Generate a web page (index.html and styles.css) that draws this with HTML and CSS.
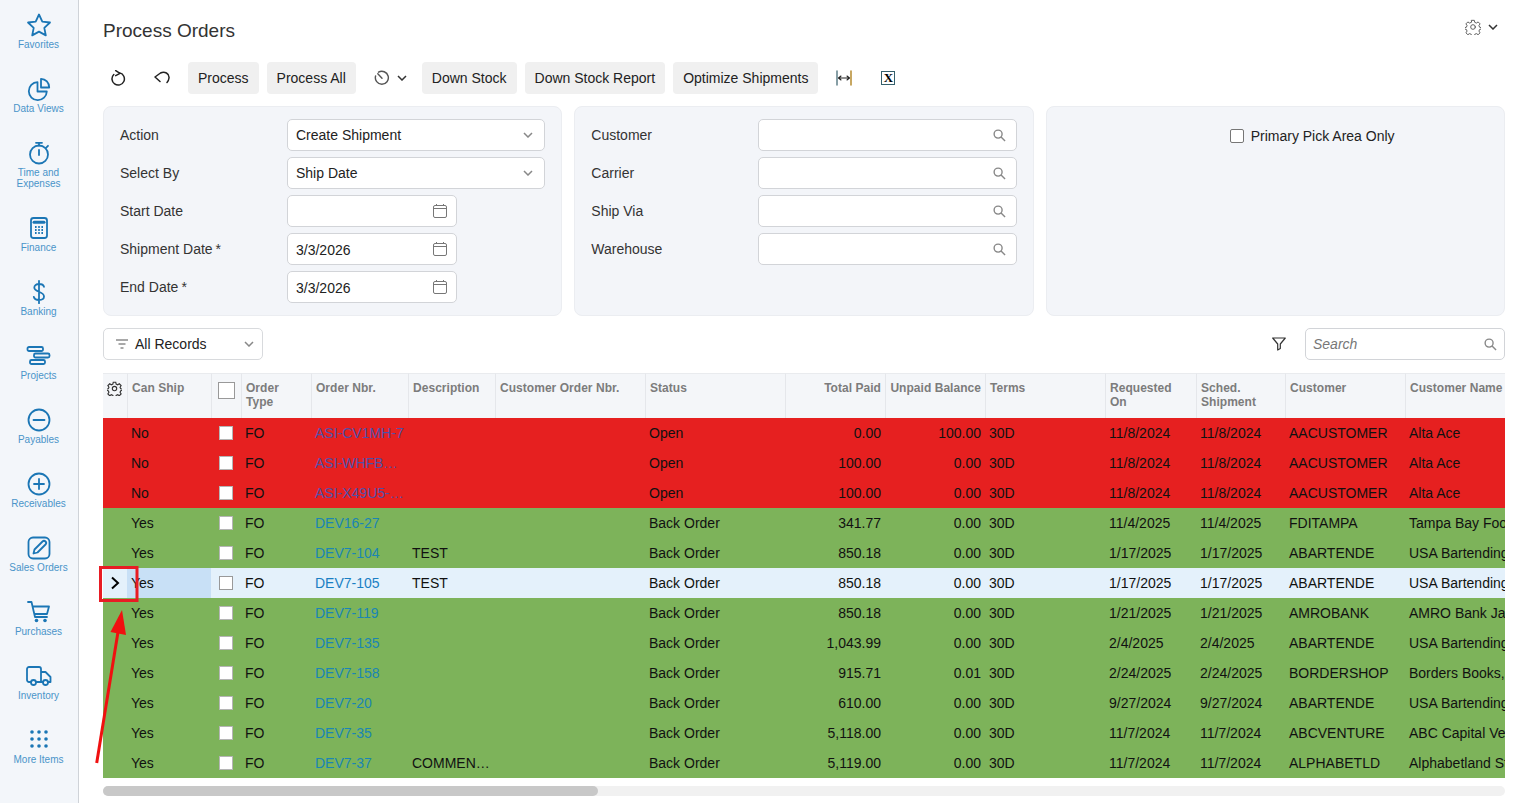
FILE: index.html
```html
<!DOCTYPE html>
<html lang="en">
<head>
<meta charset="utf-8">
<title>Process Orders</title>
<link rel="stylesheet" href="styles.css">
</head>
<body>
<div class="app">
  <nav class="sidebar">
    <a class="nav-item"><svg class="nav-icon" viewBox="0 0 24 24"><path d="M12 1.500l3.300 7.100 7.700.9-5.700 5.300 1.500 7.600-6.800-3.800-6.800 3.800 1.500-7.600L1 9.500l7.700-.9z"/></svg><span>Favorites</span></a>
    <a class="nav-item"><svg class="nav-icon" viewBox="0 0 24 24"><path d="M10.500 5.200a9 9 0 1 0 9.300 9.300h-9.300z"/><path d="M14 1.800a8.500 8.500 0 0 1 8.200 8.700H14z"/></svg><span>Data Views</span></a>
    <a class="nav-item"><svg class="nav-icon" viewBox="0 0 24 24"><circle cx="12" cy="13.500" r="9"/><path d="M9 1.800h6M12 2v2.500M12 9v5M19 6.800l2-2"/></svg><span>Time and<br>Expenses</span></a>
    <a class="nav-item"><svg class="nav-icon" viewBox="0 0 24 24"><rect x="4" y="2" width="16" height="20" rx="2.500"/><path d="M7 6.200h10" stroke-width="3"/><path class="dots" d="M8 11h1.600M11.200 11h1.600M14.400 11h1.600M8 14h1.600M11.200 14h1.600M14.400 14h1.600M8 17h1.600M11.200 17h1.600M14.400 17h1.600"/></svg><span>Finance</span></a>
    <a class="nav-item"><svg class="nav-icon" viewBox="0 0 24 24"><path d="M17 6.800C16.500 4.800 14.500 4 12 4 9.300 4 7.300 5.200 7.300 7.500c0 5 9.700 3.500 9.700 9 0 2.300-2.200 3.500-5 3.500-2.700 0-4.700-1-5.200-3.200M12 .8v22.400"/></svg><span>Banking</span></a>
    <a class="nav-item"><svg class="nav-icon" viewBox="0 0 24 24"><rect x=".5" y="3" width="15.500" height="4" rx="1.500"/><rect x="7" y="9.500" width="15.500" height="4" rx="1.500"/><rect x="3" y="16" width="15" height="4" rx="1.500"/></svg><span>Projects</span></a>
    <a class="nav-item"><svg class="nav-icon" viewBox="0 0 24 24"><circle cx="12" cy="12" r="10.500"/><path d="M6.500 12h11"/></svg><span>Payables</span></a>
    <a class="nav-item"><svg class="nav-icon" viewBox="0 0 24 24"><circle cx="12" cy="12" r="10.500"/><path d="M7 12h10M12 7v10"/></svg><span>Receivables</span></a>
    <a class="nav-item"><svg class="nav-icon" viewBox="0 0 24 24"><rect x="1.500" y="1.500" width="21" height="21" rx="4.500"/><path d="M6.500 17.500l1-4L15.500 5.500a1.800 1.800 0 0 1 3 3L10.500 16.500z"/></svg><span>Sales Orders</span></a>
    <a class="nav-item"><svg class="nav-icon" viewBox="0 0 24 24"><path d="M1 2h3.500l3.500 15h12M6 6.500h16l-2 7.500H7.500"/><circle class="solid" cx="9.500" cy="20.500" r="1.800"/><circle class="solid" cx="18" cy="20.500" r="1.800"/></svg><span>Purchases</span></a>
    <a class="nav-item"><svg class="nav-icon nav-truck" viewBox="0 0 26 24"><path d="M5 18H3a2 2 0 0 1-2-2V5a2 2 0 0 1 2-2h10a2 2 0 0 1 2 2v13H10M15 8h4.500l5 5v5H22M17 18h-2"/><circle cx="7.500" cy="18.500" r="2.500"/><circle cx="19.500" cy="18.500" r="2.500"/></svg><span>Inventory</span></a>
    <a class="nav-item"><svg class="nav-icon" viewBox="0 0 24 24"><g class="solid"><circle cx="5" cy="4" r="1.800"/><circle cx="12" cy="4" r="1.800"/><circle cx="19" cy="4" r="1.800"/><circle cx="5" cy="11" r="1.800"/><circle cx="12" cy="11" r="1.800"/><circle cx="19" cy="11" r="1.800"/><circle cx="5" cy="18" r="1.800"/><circle cx="12" cy="18" r="1.800"/><circle cx="19" cy="18" r="1.800"/></g></svg><span>More Items</span></a>
  </nav>

  <main class="main">
    <header class="title-row">
      <h1>Process Orders</h1>
      <div class="page-settings">
        <svg class="ico16 thin" viewBox="0 0 24 24"><circle cx="12" cy="12" r="3.500"/><path d="M10 2h4l.6 3 2.500 1.100 2.600-1.700 2.900 2.900-1.700 2.600 1.100 2.500 3 .6v2l-3 .6-1.100 2.500 1.700 2.600-2.900 2.900-2.600-1.700-2.500 1.100-.6 3h-4l-.6-3-2.500-1.100-2.600 1.700-2.900-2.900 1.700-2.600-1.100-2.500-3-.6v-2l3-.6 1.100-2.500-1.700-2.600 2.900-2.900 2.600 1.700 2.500-1.100z"/></svg>
        <svg class="chev" viewBox="0 0 10 6"><path d="M1 1l4 4 4-4"/></svg>
      </div>
    </header>

    <div class="toolbar">
      <span class="tool"><svg class="ico16 dark" viewBox="0 0 16 16"><path d="M9.800 2.900A6.200 6.200 0 1 1 3.800 4.500M5.700.6L10 3.300 5.700 5.700"/></svg></span>
      <span class="tool"><svg class="ico16 dark" viewBox="0 0 16 16"><path d="M6 11.500L1 7l5.500-4C10.500.8 15.500 3.500 15 8c-.2 2-1 3.500-2 4.500"/></svg></span>
      <button class="btn">Process</button>
      <button class="btn">Process All</button>
      <span class="tool tool-menu"><svg class="ico16 thin" viewBox="0 0 16 16"><path d="M4.500 2.200A6.500 6.500 0 1 1 1.600 6M3.800 3.800L8 8.200"/></svg><svg class="chev" viewBox="0 0 10 6"><path d="M1 1l4 4 4-4"/></svg></span>
      <button class="btn">Down Stock</button>
      <button class="btn">Down Stock Report</button>
      <button class="btn">Optimize Shipments</button>
      <span class="tool tool-fit"><svg class="ico16 fit" viewBox="0 0 16 16"><path class="fit-l" d="M1 1v14"/><path class="fit-r" d="M15 1v14"/><path d="M2.500 8h11M5 6L2.500 8 5 10M11 6l2.500 2-2.500 2"/></svg></span>
      <span class="tool tool-xl"><span class="xl-box">X</span></span>
    </div>

    <section class="panels">
      <div class="panel">
        <div class="field"><label>Action</label><div class="input"><span>Create Shipment</span><svg class="chev grey" viewBox="0 0 10 6"><path d="M1 1l4 4 4-4"/></svg></div></div>
        <div class="field"><label>Select By</label><div class="input"><span>Ship Date</span><svg class="chev grey" viewBox="0 0 10 6"><path d="M1 1l4 4 4-4"/></svg></div></div>
        <div class="field"><label>Start Date</label><div class="input date"><span></span><svg class="cal" viewBox="0 0 14 14"><rect x=".5" y="1.500" width="13" height="12" rx="1.500"/><path d="M.5 4.500h13M3.500 0v2M10.500 0v2"/></svg></div></div>
        <div class="field"><label>Shipment Date<i class="req">*</i></label><div class="input date"><span>3/3/2026</span><svg class="cal" viewBox="0 0 14 14"><rect x=".5" y="1.500" width="13" height="12" rx="1.500"/><path d="M.5 4.500h13M3.500 0v2M10.500 0v2"/></svg></div></div>
        <div class="field"><label>End Date<i class="req">*</i></label><div class="input date"><span>3/3/2026</span><svg class="cal" viewBox="0 0 14 14"><rect x=".5" y="1.500" width="13" height="12" rx="1.500"/><path d="M.5 4.500h13M3.500 0v2M10.500 0v2"/></svg></div></div>
      </div>
      <div class="panel">
        <div class="field"><label>Customer</label><div class="input"><span></span><svg class="mag" viewBox="0 0 14 14"><circle cx="5.500" cy="5.500" r="4.300"/><path d="M8.700 8.700L13 13"/></svg></div></div>
        <div class="field"><label>Carrier</label><div class="input"><span></span><svg class="mag" viewBox="0 0 14 14"><circle cx="5.500" cy="5.500" r="4.300"/><path d="M8.700 8.700L13 13"/></svg></div></div>
        <div class="field"><label>Ship Via</label><div class="input"><span></span><svg class="mag" viewBox="0 0 14 14"><circle cx="5.500" cy="5.500" r="4.300"/><path d="M8.700 8.700L13 13"/></svg></div></div>
        <div class="field"><label>Warehouse</label><div class="input"><span></span><svg class="mag" viewBox="0 0 14 14"><circle cx="5.500" cy="5.500" r="4.300"/><path d="M8.700 8.700L13 13"/></svg></div></div>
      </div>
      <div class="panel panel-check">
        <span class="check check-form"></span><span>Primary Pick Area Only</span>
      </div>
    </section>

    <div class="filter-row">
      <div class="records">
        <svg class="lines" viewBox="0 0 12 10"><path d="M0 1h12M2.500 5h7M4.500 9h3"/></svg>
        <span>All Records</span>
        <svg class="chev grey" viewBox="0 0 10 6"><path d="M1 1l4 4 4-4"/></svg>
      </div>
      <svg class="funnel" viewBox="0 0 14 14"><path d="M.7 1h12.600L8.300 7v4.500L5.700 13V7z"/></svg>
      <div class="search"><span>Search</span><svg class="mag" viewBox="0 0 14 14"><circle cx="5.500" cy="5.500" r="4.300"/><path d="M8.700 8.700L13 13"/></svg></div>
    </div>

    <table class="grid">
      <colgroup>
        <col class="c-gear"><col class="c-ship"><col class="c-chk"><col class="c-type"><col class="c-nbr"><col class="c-desc"><col class="c-cust-ord"><col class="c-status"><col class="c-paid"><col class="c-bal"><col class="c-terms"><col class="c-req"><col class="c-sched"><col class="c-cust"><col class="c-name">
      </colgroup>
      <thead>
        <tr>
          <th class="gear-th"><svg class="ico14 thin-dark" viewBox="0 0 24 24"><circle cx="12" cy="12" r="3.500"/><path d="M10 2h4l.6 3 2.500 1.100 2.600-1.700 2.900 2.900-1.700 2.600 1.100 2.500 3 .6v2l-3 .6-1.100 2.500 1.700 2.600-2.900 2.900-2.600-1.700-2.500 1.100-.6 3h-4l-.6-3-2.500-1.100-2.600 1.700-2.900-2.900 1.700-2.600-1.100-2.500-3-.6v-2l3-.6 1.100-2.500-1.700-2.600 2.900-2.900 2.600 1.700 2.500-1.100z"/></svg></th>
          <th>Can Ship</th><th class="chk-th"><span class="check check-head"></span></th><th>Order<br>Type</th><th>Order Nbr.</th><th>Description</th><th>Customer Order Nbr.</th><th>Status</th><th class="num">Total Paid</th><th class="num">Unpaid Balance</th><th>Terms</th><th>Requested<br>On</th><th>Sched.<br>Shipment</th><th>Customer</th><th>Customer Name</th>
        </tr>
      </thead>
      <tbody>
        <tr class="red"><td></td><td>No</td><td class="chk"><span class="check"></span></td><td>FO</td><td><a>ASI-CV1MH-7</a></td><td></td><td></td><td>Open</td><td class="num">0.00</td><td class="num">100.00</td><td>30D</td><td>11/8/2024</td><td>11/8/2024</td><td>AACUSTOMER</td><td>Alta Ace</td></tr>
        <tr class="red"><td></td><td>No</td><td class="chk"><span class="check"></span></td><td>FO</td><td><a>ASI-WHFB…</a></td><td></td><td></td><td>Open</td><td class="num">100.00</td><td class="num">0.00</td><td>30D</td><td>11/8/2024</td><td>11/8/2024</td><td>AACUSTOMER</td><td>Alta Ace</td></tr>
        <tr class="red"><td></td><td>No</td><td class="chk"><span class="check"></span></td><td>FO</td><td><a>ASI-X49U5-…</a></td><td></td><td></td><td>Open</td><td class="num">100.00</td><td class="num">0.00</td><td>30D</td><td>11/8/2024</td><td>11/8/2024</td><td>AACUSTOMER</td><td>Alta Ace</td></tr>
        <tr class="green"><td></td><td>Yes</td><td class="chk"><span class="check"></span></td><td>FO</td><td><a>DEV16-27</a></td><td></td><td></td><td>Back Order</td><td class="num">341.77</td><td class="num">0.00</td><td>30D</td><td>11/4/2025</td><td>11/4/2025</td><td>FDITAMPA</td><td>Tampa Bay Foods</td></tr>
        <tr class="green"><td></td><td>Yes</td><td class="chk"><span class="check"></span></td><td>FO</td><td><a>DEV7-104</a></td><td>TEST</td><td></td><td>Back Order</td><td class="num">850.18</td><td class="num">0.00</td><td>30D</td><td>1/17/2025</td><td>1/17/2025</td><td>ABARTENDE</td><td>USA Bartending</td></tr>
        <tr class="selected"><td class="sel-arrow"><svg class="row-arrow" viewBox="0 0 10 14"><path d="M2 1.500L8 7l-6 5.500"/></svg></td><td class="sel-ship">Yes</td><td class="chk"><span class="check"></span></td><td>FO</td><td><a>DEV7-105</a></td><td>TEST</td><td></td><td>Back Order</td><td class="num">850.18</td><td class="num">0.00</td><td>30D</td><td>1/17/2025</td><td>1/17/2025</td><td>ABARTENDE</td><td>USA Bartending</td></tr>
        <tr class="green"><td></td><td>Yes</td><td class="chk"><span class="check"></span></td><td>FO</td><td><a>DEV7-119</a></td><td></td><td></td><td>Back Order</td><td class="num">850.18</td><td class="num">0.00</td><td>30D</td><td>1/21/2025</td><td>1/21/2025</td><td>AMROBANK</td><td>AMRO Bank Japan</td></tr>
        <tr class="green"><td></td><td>Yes</td><td class="chk"><span class="check"></span></td><td>FO</td><td><a>DEV7-135</a></td><td></td><td></td><td>Back Order</td><td class="num">1,043.99</td><td class="num">0.00</td><td>30D</td><td>2/4/2025</td><td>2/4/2025</td><td>ABARTENDE</td><td>USA Bartending</td></tr>
        <tr class="green"><td></td><td>Yes</td><td class="chk"><span class="check"></span></td><td>FO</td><td><a>DEV7-158</a></td><td></td><td></td><td>Back Order</td><td class="num">915.71</td><td class="num">0.01</td><td>30D</td><td>2/24/2025</td><td>2/24/2025</td><td>BORDERSHOP</td><td>Borders Books, Inc</td></tr>
        <tr class="green"><td></td><td>Yes</td><td class="chk"><span class="check"></span></td><td>FO</td><td><a>DEV7-20</a></td><td></td><td></td><td>Back Order</td><td class="num">610.00</td><td class="num">0.00</td><td>30D</td><td>9/27/2024</td><td>9/27/2024</td><td>ABARTENDE</td><td>USA Bartending</td></tr>
        <tr class="green"><td></td><td>Yes</td><td class="chk"><span class="check"></span></td><td>FO</td><td><a>DEV7-35</a></td><td></td><td></td><td>Back Order</td><td class="num">5,118.00</td><td class="num">0.00</td><td>30D</td><td>11/7/2024</td><td>11/7/2024</td><td>ABCVENTURE</td><td>ABC Capital Ventures</td></tr>
        <tr class="green"><td></td><td>Yes</td><td class="chk"><span class="check"></span></td><td>FO</td><td><a>DEV7-37</a></td><td>COMMEN…</td><td></td><td>Back Order</td><td class="num">5,119.00</td><td class="num">0.00</td><td>30D</td><td>11/7/2024</td><td>11/7/2024</td><td>ALPHABETLD</td><td>Alphabetland Stores</td></tr>
      </tbody>
    </table>

    <div class="scrollbar"><div class="thumb"></div></div>
  </main>

  <svg class="annotation" viewBox="0 0 60 210">
    <rect x="1.500" y="1.500" width="36.500" height="33" />
    <path class="arrow-line" d="M-2.300 197L19 66"/>
    <path class="arrow-head" d="M23 44L27 69L11.500 66z"/>
  </svg>
</div>
</body>
</html>
```
FILE: styles.css
```css
* { box-sizing: border-box; }
html, body { margin: 0; height: 100%; overflow: hidden; background: #fff; }
body { font-family: "Liberation Sans", Arial, sans-serif; font-size: 14px; color: #222; }
.app { display: flex; height: 803px; position: relative; }

.sidebar { width: 79px; flex: none; background: #f3f6fa; border-right: 1px solid #cfd3d8; padding: 13px 1px 0 0; display: flex; flex-direction: column; }
.nav-item { display: flex; flex-direction: column; align-items: center; text-align: center; color: #4a94c9; font-size: 10px; line-height: 11px; padding-bottom: 27px; }
.nav-item span { margin-top: 2px; }
.nav-icon { width: 24px; height: 24px; fill: none; stroke: #1b76b5; stroke-width: 1.800; stroke-linejoin: round; stroke-linecap: round; overflow: visible; }
.nav-truck { width: 26px; }
.nav-icon .solid { fill: #1b76b5; stroke: none; }
.nav-icon .dots { stroke-width: 1.800; stroke-linecap: butt; }

.main { flex: 1; min-width: 0; padding: 0 22px 0 24px; display: flex; flex-direction: column; }
.title-row { height: 62px; display: flex; justify-content: space-between; padding-top: 19px; }
h1 { margin: 0; font-size: 19px; font-weight: 400; line-height: 23px; color: #333; }
.page-settings { display: flex; align-items: center; gap: 7px; height: 16px; margin-right: 7px; }

.ico16 { width: 16px; height: 16px; fill: none; stroke-linecap: round; stroke-linejoin: round; }
.ico14 { width: 15px; height: 15px; fill: none; }
.dark { stroke: #222; stroke-width: 1.500; }
.thin { stroke: #555; stroke-width: 1.400; }
.thin-dark { stroke: #333; stroke-width: 1.800; }
.chev { width: 10px; height: 6px; fill: none; stroke: #333; stroke-width: 1.500; }
.chev.grey { stroke: #888; }

.toolbar { display: flex; align-items: center; height: 32px; }
.tool { display: flex; align-items: center; justify-content: center; height: 32px; }
.tool:nth-child(1) { width: 30px; }
.tool:nth-child(2) { width: 32px; margin-left: 13px; margin-right: 10px; }
.btn { height: 32px; padding: 0 10px; margin-right: 8px; border: 0; border-radius: 4px; background: #f0f0f0; color: #222; font: 14px "Liberation Sans", Arial, sans-serif; }
.tool-menu { gap: 7px; width: 33px; margin-left: 10px; margin-right: 15px; }
.tool-fit { width: 30px; margin-left: 3px; }
.tool-xl { width: 30px; margin-left: 14px; }
.fit { stroke: #222; stroke-width: 1.100; }
.fit .fit-l { stroke: #5f7f88; stroke-width: 1.500; }
.fit .fit-r { stroke: #b58a2e; stroke-width: 1.500; }
.xl-box { width: 14px; height: 14px; border: 1.500px solid #35606c; font: 700 13px/11px "Liberation Serif", serif; text-align: center; color: #000; }

.panels { display: grid; grid-template-columns: repeat(3, 1fr); gap: 12px; margin-top: 12px; }
.panel { height: 210px; background: #f3f5f9; border: 1px solid #ebedf1; border-radius: 8px; padding: 12px 16px; display: flex; flex-direction: column; gap: 6px; }
.field { display: grid; grid-template-columns: 167px 1fr; align-items: center; height: 32px; }
.field label { color: #333; }
.req { font-style: normal; margin-left: 3px; }
.input { height: 32px; background: #fff; border: 1px solid #d2d4d8; border-radius: 5px; padding: 0 8px; display: flex; align-items: center; justify-content: space-between; color: #222; }
.input.date { width: 170px; padding-top: 1px; }
.input .chev { margin-right: 3px; }
.cal { width: 14px; height: 14px; fill: none; stroke: #777; stroke-width: 1; margin: -1px 1px 0 0; }
.mag { width: 13px; height: 13px; fill: none; stroke: #888; stroke-width: 1.500; margin-right: 2px; }
.panel-check { flex-direction: row; align-items: flex-start; gap: 7px; padding: 21px 0 0 183px; color: #222; }

.check { display: inline-block; width: 14px; height: 14px; background: #fff; border: 1px solid #bbb; }
.check-form { margin-top: 1px; border: 1px solid #767676; border-radius: 2px; }
.check-head { width: 17px; height: 17px; border-color: #999; display: block; margin: 8px 0 0 6px; }

.filter-row { display: flex; align-items: center; height: 32px; margin-top: 12px; }
.records { width: 160px; height: 32px; border: 1px solid #d8dadd; border-radius: 5px; display: flex; align-items: center; padding: 0 8px 0 12px; }
.records span { flex: 1; margin-left: 7px; }
.lines { width: 12px; height: 10px; fill: none; stroke: #555; stroke-width: 1.200; }
.funnel { width: 14px; height: 14px; margin-left: auto; margin-right: 19px; fill: none; stroke: #333; stroke-width: 1.200; stroke-linejoin: round; }
.search { width: 200px; height: 32px; border: 1px solid #d2d4d8; border-radius: 5px; display: flex; align-items: center; justify-content: space-between; padding: 0 5px 0 7px; color: #777; font-style: italic; }

.grid { width: 1402px; margin-top: 13px; table-layout: fixed; border-collapse: separate; border-spacing: 0; }
.c-gear { width: 24px; } .c-ship { width: 84px; } .c-chk { width: 30px; } .c-type { width: 70px; }
.c-nbr { width: 97px; } .c-desc { width: 87px; } .c-cust-ord { width: 150px; } .c-status { width: 140px; }
.c-paid { width: 100px; } .c-bal { width: 100px; } .c-terms { width: 120px; } .c-req { width: 91px; }
.c-sched { width: 89px; } .c-cust { width: 120px; } .c-name { width: 100px; }
th { height: 45px; padding: 7px 4px 0 4px; background: #f4f6f9; border-top: 1px solid #e9ebee; border-left: 1px solid #e5e7eb; color: #7c7c7c; font-size: 12px; line-height: 14px; font-weight: 700; letter-spacing: .04px; text-align: left; vertical-align: top; white-space: nowrap; overflow: hidden; }
th:first-child { border-left: 0; padding: 7px 0 0 4px; }
.chk-th { padding: 0; }
td { height: 30px; padding: 0 4px; white-space: nowrap; overflow: hidden; color: #111; }
th.num, td.num { text-align: right; }
.chk { padding: 0 0 0 8px; line-height: 0; vertical-align: middle; }
.red td { background: #e62020; }
.green td { background: #7db35a; }
.selected td { background: #e4f1fb; }
.selected td.sel-ship { background: #c8e0f6; }
.selected .check { border-color: #999; }
.red .check, .green .check { border-color: #b5b5b5; }
a { color: #1a85b5; }
.red a { color: #4f50a8; }
.selected a { color: #1a7fc4; }
.sel-arrow { padding: 0 0 0 7px; line-height: 0; }
.row-arrow { width: 10px; height: 14px; fill: none; stroke: #000; stroke-width: 2; }

.scrollbar { height: 10px; margin-top: 8px; background: #f1f1f1; border-radius: 5px; }
.thumb { width: 495px; height: 10px; background: #c8c8c8; border-radius: 5px; }

.annotation { position: absolute; left: 99px; top: 566px; width: 60px; height: 210px; overflow: visible; }
.annotation rect { fill: none; stroke: #e81c24; stroke-width: 3; }
.arrow-line { stroke: #f01010; stroke-width: 3; fill: none; }
.arrow-head { fill: #f01010; }
```
